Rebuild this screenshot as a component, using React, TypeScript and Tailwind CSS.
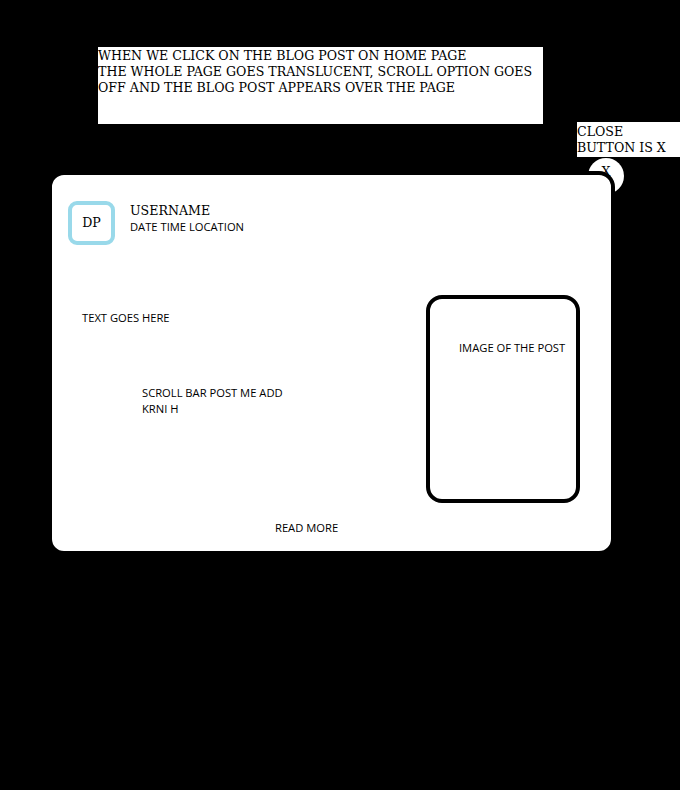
import React from "react";

const serif = { fontFamily: '"DejaVu Serif", "Liberation Serif", serif' } as const;

export default function App() {
  return (
    <div className="w-[680px] h-[790px] bg-black overflow-hidden">
      <div className="flex items-start">
        <div
          className="ml-[98px] mt-[47px] w-[445px] h-[77px] bg-white pt-[1px] text-[12.6px] leading-[16px] text-black whitespace-nowrap"
          style={serif}
        >
          WHEN WE CLICK ON THE BLOG POST ON HOME PAGE
          <br />
          THE WHOLE PAGE GOES TRANSLUCENT, SCROLL OPTION GOES
          <br />
          OFF AND THE BLOG POST APPEARS OVER THE PAGE
        </div>
        <div
          className="ml-[34px] mt-[122px] w-[103px] h-[35px] bg-white pt-[2px] text-[12.6px] leading-[16px] text-black whitespace-nowrap"
          style={serif}
        >
          CLOSE
          <br />
          BUTTON IS X
        </div>
      </div>

      <div className="relative ml-[48px] mt-[14px] w-[567px]">
        <div
          className="absolute left-[540px] top-[-13px] w-[36px] h-[36px] rounded-full bg-white flex justify-center pt-[6px] text-[12.6px] leading-[16px] text-black"
          style={serif}
        >
          X
        </div>
        <div className="relative z-10 h-[384px] rounded-[16px] border-4 border-black bg-white font-['Open_Sans',sans-serif] text-[11.2px] leading-[16px] text-black">
          <div className="flex items-start pl-[16px] pt-[26px]">
            <div
              className="w-[47px] h-[44px] rounded-[9px] border-[4px] border-[#99d9ea] flex items-center justify-center text-[12.6px]"
              style={serif}
            >
              DP
            </div>
            <div className="ml-[15px] mt-[2px] flex flex-col">
              <div className="text-[12.6px] leading-[16px]" style={serif}>
                USERNAME
              </div>
              <div>DATE TIME LOCATION</div>
            </div>
          </div>

          <div className="flex mt-[50px]">
            <div className="flex-1 pl-[30px] pt-[15px]">
              <div>TEXT GOES HERE</div>
              <div className="ml-[60px] mt-[59px]">
                SCROLL BAR POST ME ADD
                <br />
                KRNI H
              </div>
            </div>
            <div className="mr-[31px] w-[154px] h-[208px] rounded-[16px] border-[4px] border-black pl-[29px] pt-[41px] whitespace-nowrap">
              IMAGE OF THE POST
            </div>
          </div>

          <div className="pl-[223px] mt-[17px]">READ MORE</div>
        </div>
      </div>
    </div>
  );
}
